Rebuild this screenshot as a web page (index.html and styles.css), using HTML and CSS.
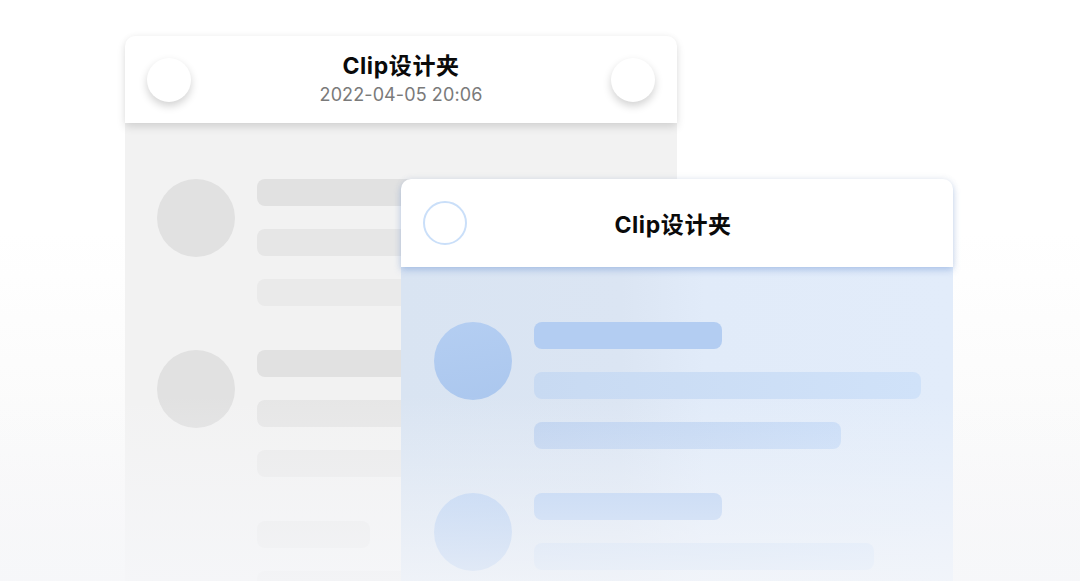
FILE: index.html
```html
<!DOCTYPE html>
<html lang="zh-CN">
<head>
<meta charset="utf-8">
<title>Clip设计夹</title>
<link rel="stylesheet" href="styles.css">
</head>
<body>
<div class="stage">
  <section class="card card-back">
    <header class="card-head">
      <span class="btn-round"></span>
      <div class="head-text">
        <div class="title">Clip设计夹</div>
        <div class="date">2022-04-05 20:06</div>
      </div>
      <span class="btn-round"></span>
    </header>
    <div class="card-body">
      <div class="row">
        <span class="avatar"></span>
        <div class="lines">
          <span class="bar b1 w-back"></span>
          <span class="bar b2 w-back"></span>
          <span class="bar b3 w-back"></span>
        </div>
      </div>
      <div class="row">
        <span class="avatar"></span>
        <div class="lines">
          <span class="bar b1 w-back"></span>
          <span class="bar b2 w-back"></span>
          <span class="bar b3 w-back"></span>
        </div>
      </div>
      <div class="row">
        <span class="avatar avatar-empty"></span>
        <div class="lines">
          <span class="bar b3 w-short"></span>
          <span class="bar b3 w-back"></span>
        </div>
      </div>
    </div>
  </section>

  <section class="card card-front">
    <header class="card-head">
      <span class="btn-ring"></span>
      <div class="head-text">
        <div class="title">Clip设计夹</div>
      </div>
      <span class="btn-spacer"></span>
    </header>
    <div class="card-body">
      <div class="row">
        <span class="avatar"></span>
        <div class="lines">
          <span class="bar b1" style="width:188px"></span>
          <span class="bar b2" style="width:387px"></span>
          <span class="bar b3" style="width:307px"></span>
        </div>
      </div>
      <div class="row">
        <span class="avatar"></span>
        <div class="lines">
          <span class="bar b1" style="width:188px"></span>
          <span class="bar b2" style="width:340px"></span>
          <span class="bar b3" style="width:260px"></span>
        </div>
      </div>
    </div>
  </section>
  <div class="fade"></div>
</div>
</body>
</html>
```

FILE: styles.css
```css
* { box-sizing: border-box; }
html, body { margin: 0; padding: 0; }
body {
  width: 1080px;
  height: 581px;
  overflow: hidden;
  font-family: Inter, "Noto Sans", "Noto Sans CJK SC", sans-serif;
  background: linear-gradient(to bottom, #ffffff 0%, #ffffff 40%, #f7f7f7 100%);
}
.stage {
  position: relative;
  width: 1080px;
  height: 581px;
  overflow: hidden;
}
.card {
  position: absolute;
  width: 552px;
  display: flex;
  flex-direction: column;
}
.card-back { left: 125px; top: 36px; height: 600px; }
.card-front { left: 401px; top: 179px; height: 460px; }

.card-head {
  position: relative;
  z-index: 2;
  display: flex;
  align-items: center;
  justify-content: space-between;
  padding: 0 22px;
  background: #fff;
  border-radius: 10px 10px 0 0;
}
.card-back .card-head {
  height: 87px;
  box-shadow: 0 4px 8px rgba(0,0,0,0.13), 0 -1px 6px rgba(0,0,0,0.03);
}
.card-front .card-head {
  height: 88px;
  box-shadow: 0 3px 7px rgba(110,150,215,0.45), 0 -1px 8px rgba(0,0,0,0.04);
}
.head-text {
  flex: 1;
  display: flex;
  flex-direction: column;
  align-items: center;
  gap: 4px;
}
.card-back .head-text { padding-bottom: 2px; }
.card-front .head-text { padding-top: 3px; padding-right: 8px; }
.title {
  font-size: 23px;
  font-weight: 700;
  color: #0a0a0a;
  line-height: 28px;
  letter-spacing: 0.6px;
}
.date {
  font-size: 18px;
  color: #7a7a7a;
  line-height: 22px;
  font-weight: 400;
  letter-spacing: 0.1px;
}
.btn-round {
  width: 44px;
  height: 44px;
  border-radius: 50%;
  background: #fff;
  box-shadow: 0 4px 8px rgba(0,0,0,0.18);
  flex: none;
}
.btn-ring {
  width: 44px;
  height: 44px;
  border-radius: 50%;
  border: 2.5px solid #cadff9;
  flex: none;
}
.btn-spacer { width: 44px; flex: none; }

.card-body {
  flex: 1;
  display: flex;
  flex-direction: column;
  gap: 44px;
  padding: 56px 0 0 32px;
}
.card-back .card-body { background: #f2f2f2; }
.card-front .card-body {
  padding-top: 55px;
  padding-left: 33px;
  background: linear-gradient(90deg, #d9e4f2 0%, #dbe5f3 40%, #e1ebf9 55%, #e2ecfa 100%);
}
.row {
  display: flex;
  gap: 22px;
}
.avatar {
  width: 78px;
  height: 78px;
  border-radius: 50%;
  flex: none;
}
.avatar-empty { visibility: hidden; }
.lines {
  display: flex;
  flex-direction: column;
  gap: 23px;
}
.bar {
  display: block;
  height: 27px;
  border-radius: 8px;
}
.w-back { width: 260px; }
.w-short { width: 113px; }

.card-back .avatar { background: #e1e1e1; }
.card-back .b1 { background: #e1e1e1; }
.card-back .b2 { background: #e6e6e6; }
.card-back .b3 { background: #eaeaea; }

.card-front .avatar { background: linear-gradient(170deg, #b4cef2, #abc7ee); }
.card-front .b1 { background: #b3cdf2; }
.card-front .b2 { background: linear-gradient(90deg, #c8daf2, #d0e2f9); }
.card-front .b3 { background: linear-gradient(90deg, #bed2ef, #c8dcf7); }

.fade {
  position: absolute;
  left: 0; top: 0; right: 0; bottom: 0;
  pointer-events: none;
  z-index: 5;
  background: linear-gradient(to bottom, rgba(246,247,250,0) 0%, rgba(246,247,250,0) 68%, rgba(246,247,250,0.4) 85%, rgba(246,247,250,0.75) 100%);
}
```
